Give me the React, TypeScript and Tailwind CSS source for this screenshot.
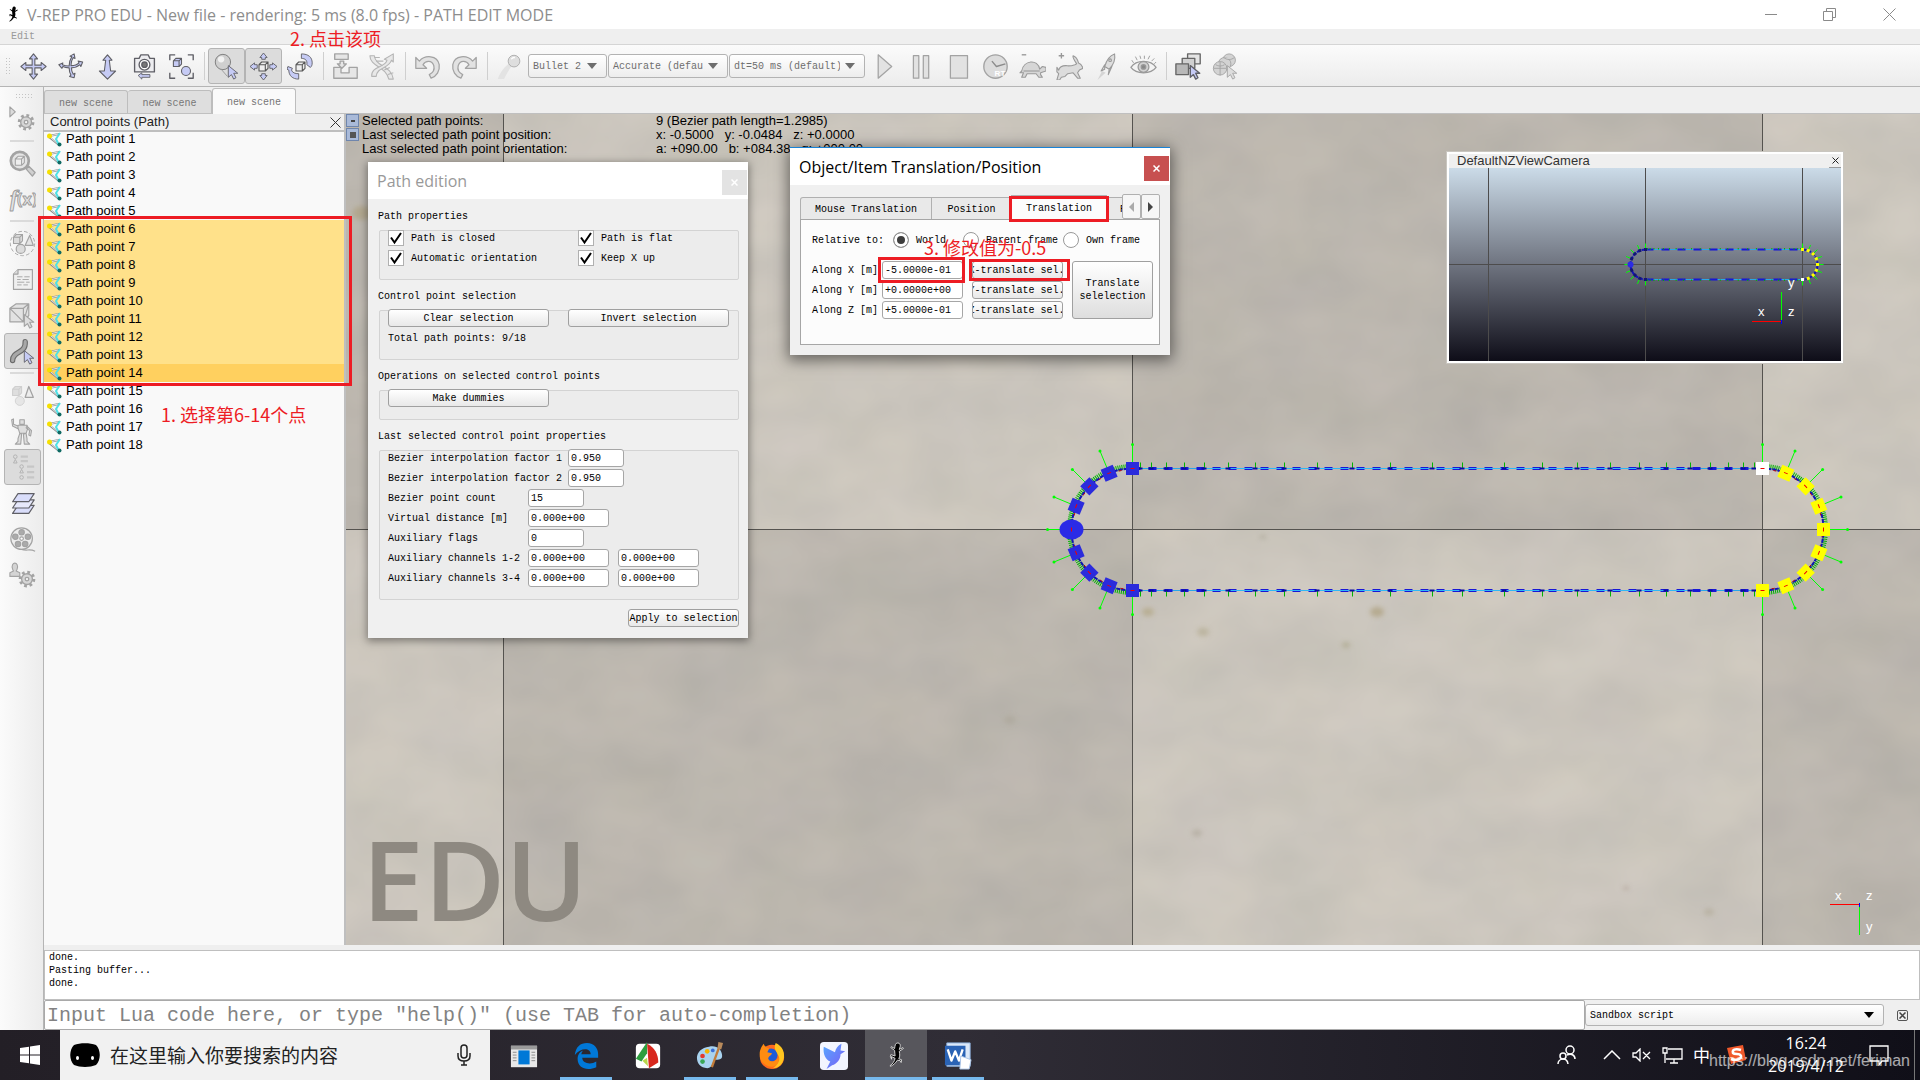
import type { ReactNode } from 'react'

const GREY = '#a3a3a3'
const DARK = '#5f5f66'
const LILAC = '#c6cbf5'

type IconProps = { children: ReactNode; size?: number }

function Icon({ children, size = 30 }: IconProps) {
  return (
    <svg
      width={size}
      height={size}
      viewBox="0 0 30 30"
      fill="none"
      strokeLinejoin="round"
      aria-hidden="true"
      className="shrink-0"
    >
      {children}
    </svg>
  )
}

const Lizard = ({ outline = 'none' }: { outline?: string }) => (
  <g stroke={outline} strokeWidth="1" fill="#000">
    <path d="M17 1c2 0 3 2 2.500 4l-1 3 4-2 .5 1-4.500 3c.5 3 1 5-.5 8l3 1-.5 3-1-2-3-.5c-2 3-4 5-7 6.500l-1-.5c3-2 5-5 5.500-8l-4-2 .3 3-1.300-3 .5-2 4.500 1.500c0-2-.5-4-.5-6l-4-3 .5-1 3.500 2c.5-3 .5-6 3.500-6z" />
  </g>
)

const Pointer = ({ fill = LILAC, stroke = DARK }: { fill?: string; stroke?: string }) => (
  <path d="M17 14v13l3.500-3 2.500 5 2.500-1.500-2.500-5h4.500z" fill={fill} stroke={stroke} />
)

const Gear = ({ x, y }: { x: number; y: number }) => (
  <g transform={`translate(${x} ${y})`}>
    <circle r="7.500" stroke={GREY} strokeWidth="3.500" strokeDasharray="3 2.900" />
    <circle r="6" fill="#d6d6d6" stroke={GREY} strokeWidth="1.500" />
    <circle r="2" fill="#f6f6f6" stroke={GREY} strokeWidth="1.500" />
  </g>
)

const Cube = ({ x, y, s, fill, stroke }: { x: number; y: number; s: number; fill: string; stroke: string }) => (
  <g transform={`translate(${x} ${y}) scale(${s})`} fill={fill} stroke={stroke} strokeWidth={1.2 / s}>
    <path d="M0 3h7v7H0zM0 3l3-3h7L7 3zM7 3l3-3v7l-3 3z" />
  </g>
)

const panIcon = (
  <path
    d="M15 1l4.500 5.500h-3v7h7v-3L29 15l-5.500 4.500v-3h-7v7h3L15 29l-4.500-5.500h3v-7h-7v3L1 15l5.500-4.500v3h7v-7h-3z"
    fill={LILAC}
    stroke={DARK}
    strokeWidth="1.200"
  />
)
const rotateCamIcon = (
  <path
    d="M19 1l1 5-2-1c-2 3-2.500 6-2.500 9 3 0 7-1 9-3l-1-2 5 1-2 5-1-2c-3 2.500-6 3.500-9.500 3.500 0 3 .5 5 2 7l2-1-1 5-5-1.500 1.500-1.500c-1.500-2.500-2-5-2-8-3 0-5-.5-7-1.500l-1 2L2 13l4.500-2-.5 2c2 1 5 1.500 7.500 1.500 0-4 1-7.500 3-10.500l-2-.5z"
    fill={LILAC}
    stroke={DARK}
    strokeWidth="1.200"
  />
)
const shiftIcon = (
  <path
    d="M15 2l5 6h-3l1.500 12H24l-9 9-9-9h5.500L13 8h-3z"
    fill={LILAC}
    stroke={DARK}
    strokeWidth="1.200"
  />
)
const cameraIcon = (
  <g stroke={DARK} strokeWidth="1.500">
    <path d="M4 6h5l2-4h8l2 4h5v15H4z" fill="#ededf0" />
    <circle cx="15" cy="13" r="6" fill="#fff" />
    <circle cx="15" cy="13" r="3" fill="#777" />
    <path d="M8 25l4-3v2h9v3h-9v2z" fill={LILAC} strokeWidth="1" />
  </g>
)
const fitIcon = (
  <g stroke={DARK} strokeWidth="1.500">
    <path d="M2 8V2h6M22 2h6v6M28 22v6h-6M8 28H2v-6" />
    <Cube x={6} y={6} s={0.9} fill={LILAC} stroke={DARK} />
    <circle cx="20" cy="20" r="5" fill={LILAC} strokeWidth="1.200" />
  </g>
)
const selectIcon = (
  <g>
    <circle cx="11" cy="10" r="8.500" fill="#cfcfcf" stroke="#777" />
    <circle cx="9" cy="7" r="3.500" fill="#f2f2f2" />
    <path d="M9 18l7 8" stroke="#999" />
    <Pointer />
  </g>
)
const moveObjIcon = (
  <g stroke={DARK} fill={LILAC}>
    <path d="M15 0l4 5h-2v2h-4V5h-2zM15 30l4-5h-2v-2h-4v2h-2zM0 15l5-4v2h3v4H5v2zM30 15l-5-4v2h-3v4h3v2z" />
    <Cube x={10} y={10} s={1} fill="#eee" stroke="#555" />
  </g>
)
const rotateObjIcon = (
  <g stroke={DARK} fill={LILAC}>
    <path d="M16 1c8 0 12 4 12 10 0 3-1 4-2 5l-4-3c1-5-2-7-6-7z" />
    <path d="M1 15l5 2-1 2c1 3 4 4 8 4v6C6 29 2 25 2 19l-2-1z" />
    <Cube x={10} y={10} s={1} fill="#eee" stroke="#555" />
  </g>
)
const assembleIcon = (
  <g stroke={GREY} strokeWidth="1.500" fill="#e6e6e6">
    <path d="M3 1h15v6H3zM2 16h8v6h9v-6h9v12H2zM9 9h4v3h3l-5 5-5-5h3z" />
  </g>
)
const ikIcon = (
  <g stroke="#b5b5b5" strokeWidth="1.200" fill="#e8e8e8">
    <path d="M1 3c0 12 18 12 21 26h5C25 14 7 15 6 3z" />
    <path d="M3 26c-1-12 15-9 17-18l-3-1 10-6v9l-2-2C22 18 9 15 8 26z" />
    <path d="M6 5h6M8 9h8M17 19l6-3M21 24l6-2" />
  </g>
)
const undoIcon = (
  <path
    d="M2 5l4 4c6-7 20-7 22 4 1 7-3 13-9 15l-2-4c4-2 6-6 5-10-2-6-9-6-12-1l4 4H2z"
    fill="#e2e2e2"
    stroke={GREY}
    strokeWidth="1.400"
  />
)
const redoIcon = <g transform="translate(30 0) scale(-1 1)">{undoIcon}</g>
const brushIcon = (
  <g>
    <path d="M2 29c3-9 8-14 13-18l3 3c-4 5-6 9-9 15z" fill="#e3e3e3" />
    <circle cx="20" cy="9" r="6.500" fill="#dedede" stroke="#aaa" />
    <path d="M17 7c1-2 3-2 4-2" stroke="#fff" strokeWidth="1.500" />
  </g>
)
const playIcon = <path d="M8 2l15 13L8 28z" fill="#e2e2e2" stroke={GREY} strokeWidth="1.400" />
const pauseIcon = <path d="M6 3h6v25H6zM17 3h6v25h-6z" fill="#e2e2e2" stroke={GREY} strokeWidth="1.400" />
const stopIcon = <path d="M6 3h19v25H6z" fill="#e2e2e2" stroke={GREY} strokeWidth="1.400" />
const clockIcon = (
  <g>
    <circle cx="15" cy="15" r="13" fill="#dcdcdc" stroke={GREY} strokeWidth="1.500" />
    <path d="M11 9l5 6 10-3" stroke="#8b8b8b" strokeWidth="1.500" />
    <text x="14" y="26" fontSize="9" fontWeight="700" fill="#fff" fontFamily="Liberation Sans">
      RT
    </text>
  </g>
)
const turtleIcon = (
  <g stroke="#999" strokeWidth="1.200" fill="#d6d6d6">
    <path d="M3 2h5" strokeWidth="1.500" />
    <path d="M3 20c2-12 18-14 20-2l3-3 4 1v4l-6 2v2l2 3h-4l-3-4H9l-2 4H3l2-5H1z" />
    <path d="M5 20h18" />
  </g>
)
const rabbitIcon = (
  <g stroke="#999" strokeWidth="1.200" fill="#dcdcdc">
    <path d="M3 3h6M6 0v6" strokeWidth="1.500" />
    <path d="M23 12c-2-3-5-7-4-9 3 1 5 4 6 8 3 1 4 3 5 6l-4 2-2 3 3 6h-3l-5-6-6 1-3 3-4 1-2 3H1l2-7-2-2v-5l2 3c1-4 4-5 8-5 4 1 7 0 10-1z" />
  </g>
)
const rocketIcon = (
  <g stroke="#999" strokeWidth="1.200" fill="#dedede">
    <path d="M24 1c1 6-1 12-6 17l-5-3c2-7 5-12 11-14zM13 13l-4 7 4-2zM18 18l-1 6 4-9z" />
    <circle cx="19" cy="8" r="1.500" />
    <path d="M10 20l4 2-9 8z" stroke="none" fill="#d5d5d5" />
  </g>
)
const eyeIcon = (
  <g stroke="#999" strokeWidth="1.400">
    <path d="M1 16c6-9 22-9 28 0-6 8-22 8-28 0z" fill="#f3f3f3" />
    <circle cx="15" cy="15.500" r="6" fill="#d2d2d2" />
    <circle cx="15" cy="15.500" r="2.500" fill="#888" />
    <path d="M4 11L2 8M8 8L6 4M12 6.500L11 3M16 6.500V3M20 7l2-4M24 9l3-3M27 12l2-2" strokeWidth="1" />
  </g>
)
const pagesIcon = (
  <g stroke="#666" strokeWidth="1.500">
    <path d="M14 1h14v11H14z" fill="#e4e4e4" />
    <path d="M8 6h14v11H8z" fill="#d0d0d0" />
    <path d="M1 12h14v12H1z" fill="#b8b8b8" />
    <Pointer />
  </g>
)
const sceneSelIcon = (
  <g stroke={GREY} fill="#d3d3d3">
    <circle cx="19" cy="8" r="7" />
    <circle cx="14" cy="12" r="7" />
    <circle cx="9" cy="17" r="7.500" />
    <path d="M2 17h14M9 10v15M13 5c4 3 8 3 12 0M4 13c3 2 7 2 10 0" />
    <Pointer fill="#ddd" stroke={GREY} />
  </g>
)

const simSettingsIcon = (
  <g>
    <path d="M1 1l6 5.500L1 12z" fill="#dcdcdc" stroke={GREY} strokeWidth="1.300" />
    <Gear x={19} y={18} />
  </g>
)
const inspectIcon = (
  <g stroke={GREY} strokeWidth="1.500">
    <circle cx="12" cy="12" r="10" fill="#e4e4e4" strokeWidth="3" />
    <Cube x={7} y={7} s={1} fill="#eee" stroke={GREY} />
    <path d="M19 21l3-3 7 7-3 4z" fill="#d0d0d0" />
  </g>
)
const fxIcon = (
  <g stroke="#9b9b9b" fill="#e3e3e3" strokeWidth="1" fontWeight="700">
    <text x="1" y="22" fontSize="25" fontStyle="italic" fontFamily="Liberation Serif">
      f
    </text>
    <text x="9" y="21" fontSize="18" fontFamily="Open Sans">
      (x)
    </text>
  </g>
)
const shapesIcon = (
  <g stroke={GREY}>
    <circle cx="15" cy="15" r="13.500" strokeDasharray="4 2.500" />
    <Cube x={5} y={5} s={1} fill="#dcdcdc" stroke={GREY} />
    <path d="M23 6l4 11h-9z" fill="#e4e4e4" strokeWidth="1.300" />
    <circle cx="13" cy="21" r="5" fill="#dcdcdc" strokeWidth="1.300" />
  </g>
)
const scriptIcon = (
  <g stroke={GREY} strokeWidth="1.300">
    <path d="M10 4h16v22H5V9z" fill="#efefef" />
    <path d="M5 9h5V4" fill="#ddd" />
    <path d="M9 12h6M17 12h6M9 15h4M15 15h7M9 18h8M19 18h4M9 21h5M16 21h5" strokeWidth="1" />
  </g>
)
const shapeEditIcon = (
  <g stroke={GREY} strokeWidth="1.300" fill="#e2e2e2">
    <path d="M1 7h15v15H1zM1 7l7-5h14l-6 5zM16 7l6-5v13l-6 7zM1 7l15 15M16 22L22 2" />
    <Pointer fill="#ddd" stroke={GREY} />
  </g>
)
const pathEditIcon = (
  <g>
    <path d="M4 25c0-11 15-7 14-21" stroke="#6b6b6b" strokeWidth="6" strokeLinecap="round" />
    <path d="M4 25c0-11 15-7 14-21" stroke="#a8a8a8" strokeWidth="3.500" strokeLinecap="round" />
    <Pointer />
  </g>
)
const shapes2Icon = (
  <g stroke="#d0d0d0">
    <Cube x={4} y={5} s={1} fill="#dedede" stroke="#cfcfcf" />
    <path d="M22 5l5 12h-9z" fill="#ededed" stroke={GREY} strokeWidth="1.400" />
    <circle cx="12" cy="21" r="5" fill="#e6e6e6" />
  </g>
)
const robotIcon = (
  <g stroke={GREY} strokeWidth="1.200" fill="#dedede">
    <path d="M12 2h5v5h-5zM10 8h10l1 3-2 6h-7l-2-6zM10 9L5 7V1l-2 1 1 7 6 3zM20 9l5 5-1 6-2-1 1-5-4-3zM12 17l-2 6v3l-3 3h6l1-11zM19 17l1 6v3l3 3h-6l-1-11z" />
  </g>
)
const hierarchyIcon = (
  <g stroke="#b0b0b0">
    <circle cx="7" cy="3" r="2" />
    <path d="M7 6l2 4H5z" />
    <circle cx="14" cy="14" r="2" />
    <path d="M14 17l2 4h-4z" />
    <circle cx="14" cy="26" r="2" />
    <path d="M13 3h8M13 8h8M20 14h8M20 20h8M20 26h8" strokeWidth="2.500" stroke="#c6c6c6" />
  </g>
)
const layersIcon = (
  <g stroke={DARK} strokeWidth="1.300">
    <path d="M10 17h18l-6 9H4z" fill="#d9ddfa" />
    <path d="M10 11h18l-6 9H4z" fill="#e6e8fb" />
    <path d="M10 4h18l-6 9H4z" fill="#d9ddfa" />
  </g>
)
const filmIcon = (
  <g stroke={GREY} strokeWidth="1.300">
    <circle cx="14" cy="14" r="12" fill="#ececec" />
    <path d="M14 26c6 2 9-1 15 2" />
    <g fill="#ababab">
      <circle cx="14" cy="7" r="3" />
      <circle cx="21" cy="12" r="3" />
      <circle cx="18" cy="20" r="3" />
      <circle cx="10" cy="20" r="3" />
      <circle cx="7" cy="12" r="3" />
    </g>
    <circle cx="14" cy="14" r="2" fill="#fff" />
  </g>
)
const userIcon = (
  <g>
    <path d="M4 8c-3-9 8-9 5 0l-1 2 4 2v4H1v-4l4-2z" fill="#d4d4d4" stroke={GREY} strokeWidth="1.200" />
    <Gear x={20} y={19} />
  </g>
)

type Tool = { name: string; icon: ReactNode; active?: boolean }

const viewTools: Tool[][] = [
  [
    { name: 'Camera pan', icon: panIcon },
    { name: 'Camera rotate', icon: rotateCamIcon },
    { name: 'Camera shift', icon: shiftIcon },
    { name: 'Camera angle', icon: cameraIcon },
    { name: 'Fit to view', icon: fitIcon },
  ],
  [
    { name: 'Click selection', icon: selectIcon, active: true },
    { name: 'Item translate', icon: moveObjIcon, active: true },
    { name: 'Item rotate', icon: rotateObjIcon },
  ],
  [
    { name: 'Assemble', icon: assembleIcon },
    { name: 'Transfer DNA', icon: ikIcon },
  ],
  [
    { name: 'Undo', icon: undoIcon },
    { name: 'Redo', icon: redoIcon },
  ],
]

const simTools: Tool[] = [
  { name: 'Start', icon: playIcon },
  { name: 'Suspend', icon: pauseIcon },
  { name: 'Stop', icon: stopIcon },
  { name: 'Real-time', icon: clockIcon },
  { name: 'Slower', icon: turtleIcon },
  { name: 'Faster', icon: rabbitIcon },
  { name: 'Threaded rendering', icon: rocketIcon },
  { name: 'Visualization', icon: eyeIcon },
]

const pageTools: Tool[] = [
  { name: 'Page selector', icon: pagesIcon },
  { name: 'Scene selector', icon: sceneSelIcon },
]

const sideTools: Tool[][] = [
  [{ name: 'Simulation settings', icon: simSettingsIcon }],
  [
    { name: 'Object properties', icon: inspectIcon },
    { name: 'Calculation modules', icon: fxIcon },
  ],
  [
    { name: 'Collections', icon: shapesIcon },
    { name: 'Scripts', icon: scriptIcon },
    { name: 'Shape edit mode', icon: shapeEditIcon },
    { name: 'Path edit mode', icon: pathEditIcon, active: true },
  ],
  [
    { name: 'Selection', icon: shapes2Icon },
    { name: 'Model browser', icon: robotIcon },
    { name: 'Scene hierarchy', icon: hierarchyIcon, active: true },
    { name: 'Layers', icon: layersIcon },
    { name: 'Video recorder', icon: filmIcon },
    { name: 'User settings', icon: userIcon },
  ],
]

function ToolButton({ tool }: { tool: Tool }) {
  return (
    <button
      aria-label={tool.name}
      className={
        tool.active
          ? 'flex h-9 w-[37px] shrink-0 items-center justify-center rounded-[3px] border border-[#b4b4b4] bg-[#dcdcdc]'
          : 'flex h-9 w-[37px] shrink-0 items-center justify-center'
      }
    >
      <Icon size={27}>{tool.icon}</Icon>
    </button>
  )
}

const Divider = () => <div className="mr-[3px] ml-1 h-7 w-px shrink-0 bg-[#cfcfcf]" />

function Combo({ label, value, className }: { label: string; value: string; className: string }) {
  return (
    <div className={`relative shrink-0 ${className}`}>
      <select
        aria-label={label}
        className="h-full w-full appearance-none overflow-hidden rounded-[3px] border border-[#b3b3b3] bg-linear-to-b from-white to-[#ededed] pr-6 pl-1 outline-none"
      >
        <option>{value}</option>
      </select>
      <svg width="10" height="6" viewBox="0 0 10 6" className="pointer-events-none absolute top-1/2 right-[10px] -mt-[3px]">
        <path d="M0 0h10L5 6z" fill="currentColor" />
      </svg>
    </div>
  )
}

function TitleBar() {
  return (
    <header className="flex h-[29px] shrink-0 items-center bg-white pl-1 font-['Open_Sans',sans-serif] text-base text-[#8d8d8d]">
      <Icon size={18}>
        <Lizard />
      </Icon>
      <h1 className="ml-[5px]">V-REP PRO EDU - New file - rendering: 5 ms (8.0 fps) - PATH EDIT MODE</h1>
      <div className="ml-auto flex text-[#8a8a8a]">
        <button aria-label="Minimize" className="flex w-[58px] justify-center">
          <svg width="12" height="12" viewBox="0 0 12 12" stroke="currentColor" fill="none">
            <path d="M0 6.500h12" />
          </svg>
        </button>
        <button aria-label="Restore" className="flex w-[58px] justify-center">
          <svg width="13" height="13" viewBox="0 0 13 13" stroke="currentColor" fill="none">
            <path d="M.5 3.500h9v9h-9zM3.500 3V.5h9v9H10" />
          </svg>
        </button>
        <button aria-label="Close" className="flex w-[62px] justify-center">
          <svg width="13" height="13" viewBox="0 0 13 13" stroke="currentColor" fill="none">
            <path d="M.5.5l12 12M12.500.5l-12 12" />
          </svg>
        </button>
      </div>
    </header>
  )
}

function Toolbar() {
  return (
    <div className="flex h-[42px] shrink-0 items-center border-b border-[#b5b5b5] bg-linear-to-b from-[#fbfbfb] to-[#ececec] pt-px text-[#6e6e6e]">
      <div className="mr-1 ml-[5px] h-[18px] w-[6px] bg-[radial-gradient(#c4c4c4_1px,transparent_1px)] bg-size-[3px_3px]" />
      {viewTools.map((group) => (
        <div key={group[0].name} className="flex shrink-0 items-center">
          {group.map((tool) => (
            <ToolButton key={tool.name} tool={tool} />
          ))}
          <Divider />
        </div>
      ))}
      <ToolButton tool={{ name: 'Dynamics visualization', icon: brushIcon }} />
      <Combo label="Physics engine" value="Bullet 2" className="h-6 w-[79px]" />
      <Combo label="Engine precision" value="Accurate (default)" className="ml-px h-6 w-[120px]" />
      <Combo label="Time step" value="dt=50 ms (default)" className="mr-px ml-px h-6 w-[136px]" />
      {simTools.map((tool) => (
        <ToolButton key={tool.name} tool={tool} />
      ))}
      <Divider />
      {pageTools.map((tool) => (
        <ToolButton key={tool.name} tool={tool} />
      ))}
    </div>
  )
}

function SideBar() {
  return (
    <nav className="flex w-11 shrink-0 flex-col border-r border-[#b5b5b5] bg-linear-to-r from-[#fbfbfb] to-[#ececec] pl-1">
      <div className="mt-[6px] mb-[2px] ml-[11px] h-[6px] w-[18px] bg-[radial-gradient(#c4c4c4_1px,transparent_1px)] bg-size-[3px_3px]" />
      {sideTools.map((group, i) => (
        <div key={group[0].name} className="flex flex-col">
          {i > 0 && <div className="my-[3px] ml-[6px] h-[2px] w-6 bg-[#dadada]" />}
          {group.map((tool) => (
            <ToolButton key={tool.name} tool={tool} />
          ))}
        </div>
      ))}
    </nav>
  )
}

function SceneTabs() {
  return (
    <div className="flex h-[27px] shrink-0 items-end border-b border-[#c0c0c0] bg-[#efefef] text-[#777]">
      <button className="h-[23px] w-[84px] rounded-t-[3px] border border-b-0 border-[#bdbdbd] bg-[#dedede] pt-[2px]">
        new scene
      </button>
      <button className="h-[23px] w-[84px] rounded-t-[3px] border border-b-0 border-l-0 border-[#bdbdbd] bg-[#dedede] pt-[2px]">
        new scene
      </button>
      <button className="-mb-px h-[26px] w-[84px] rounded-t-[3px] border border-b-0 border-[#bdbdbd] bg-[#fafafa] pt-[2px]">
        new scene
      </button>
    </div>
  )
}

function rowColor(n: number) {
  if (n === 14) return 'bg-[#ffd05f]'
  if (n >= 6 && n < 14) return 'bg-[#ffe18a]'
  return ''
}

function ControlPoints() {
  return (
    <aside className="w-[302px] shrink-0 border-r-2 border-[#bfbfbf] bg-[#f9f9f9] font-['Liberation_Sans',sans-serif] text-[13px] text-black">
      <div className="flex h-[18px] items-center justify-between border-b-2 border-[#bfbfbf] bg-[#efefef] pr-[3px] pl-[6px] text-[#222]">
        <h2>Control points (Path)</h2>
        <button aria-label="Close panel">
          <svg width="11" height="11" viewBox="0 0 11 11" stroke="#333" fill="none">
            <path d="M.5.5l10 10M10.500.5l-10 10" />
          </svg>
        </button>
      </div>
      <ul className="-mt-[2px]">
        {Array.from({ length: 18 }, (_, i) => i + 1).map((n) => (
          <li key={n} className={rowColor(n)}>
            <button className="flex h-[18px] w-full items-center gap-1 pl-[3px] text-left">
              <svg width="15" height="15" viewBox="0 0 15 15" fill="none">
                <path d="M2 4l10-2M2 5l10 8" stroke="#8d8d8d" strokeWidth="2" />
                <path d="M3 4l8-2M4 6l7 6" stroke="#e4e4e4" strokeWidth="1" />
                <path d="M13 1l-4 6 3 6" stroke="#4fe0e6" strokeWidth="2" />
                <circle cx="2.500" cy="4" r="2.500" fill="#f6e000" />
                <circle cx="12.500" cy="12.500" r="2" fill="#0f6a63" />
              </svg>
              Path point {n}
            </button>
          </li>
        ))}
      </ul>
    </aside>
  )
}

type LoopProps = { left: number; right: number; cy: number; r: number; spoke: number; node: number; whiteAt: number }

const angles = Array.from({ length: 9 }, (_, i) => -90 + i * 22.5)
const tickOffsets = [8, 19, 34, 52, 72, 96, 123, 152, 185, 220, 258, 300]

function at(cx: number, cy: number, r: number, deg: number) {
  const a = (deg * Math.PI) / 180
  return [cx + r * Math.cos(a), cy + r * Math.sin(a)]
}

// Closed path: two straight runs joined by half circles, one control point each 22.5 degrees
function PathLoop({ left, right, cy, r, spoke, node, whiteAt }: LoopProps) {
  const big = node > 6
  const top = cy - r
  const bottom = cy + r
  const k = (right - left) / 630
  const ticks = tickOffsets.flatMap((o) => [left + o * k, right - o * k])
  const arc = (rad: number) =>
    `M${left} ${cy - rad}A${rad} ${rad} 0 0 0 ${left} ${cy + rad}M${right} ${cy - rad}A${rad} ${rad} 0 0 1 ${right} ${cy + rad}`
  const runs = (inset: number) =>
    `M${left + inset} ${top}H${right - inset}M${left + inset} ${bottom}H${right - inset}`
  const tick = big ? 6 : 1.5
  const ends = [
    ...angles.map((a) => ({ cx: left, a: a + 180, color: big ? '#2b2bdc' : '#151575' })),
    ...angles.map((a, i) => ({ cx: right, a, color: i === whiteAt ? '#fff' : '#ffff00' })),
  ]

  return (
    <g fill="none">
      <path d={runs(0)} stroke="#2aa5e8" strokeWidth="1" />
      <path d={runs(0)} stroke="#1717d6" strokeWidth={big ? 3 : 2} strokeDasharray="8 8" />
      {big && <path d={runs(72)} stroke="#2fb6f5" strokeWidth="1" />}
      <path
        d={ticks.map((x) => `M${x} ${top}v${-tick}M${x} ${bottom}v${tick}`).join('')}
        stroke="#00b400"
        strokeWidth="1"
      />
      {big && (
        <path
          d={ticks.map((x) => `M${x - 3} ${top}h5M${x - 3} ${bottom}h5`).join('')}
          stroke="#0a0aa0"
          strokeWidth="2"
        />
      )}
      {big && <path d={arc(r + 2)} stroke="#00b400" strokeWidth="5" strokeDasharray="1 1" />}
      <path d={arc(r)} stroke="#1212b8" strokeWidth="2" strokeDasharray="4 1" />
      {big && <path d={arc(r - 1)} stroke="#c00000" strokeWidth="1" strokeDasharray="3 8" />}
      {ends.map(({ cx, a, color }) => {
        const [x, y] = at(cx, cy, r, a)
        const [tx, ty] = at(cx, cy, spoke, a)
        return (
          <g key={`${cx}-${a}`}>
            <path d={`M${x} ${y}L${tx} ${ty}`} stroke="#00ff00" strokeWidth="1" />
            {big && <circle cx={tx} cy={ty} r="1.500" fill="#00ff00" />}
            {cx === left && a === 180 ? (
              <ellipse cx={x} cy={y} rx={big ? 12 : 3} ry={big ? 10 : 3} fill="#2b2be6" />
            ) : (
              <rect
                x={x - node / 2}
                y={y - node / 2}
                width={node}
                height={node}
                fill={color}
                transform={`rotate(${a} ${x} ${y})`}
              />
            )}
            {big && <path d={`M${x - 2} ${y}h4`} stroke="#f00000" transform={`rotate(${a + 90} ${x} ${y})`} />}
          </g>
        )
      })}
    </g>
  )
}

const stains = [
  [1148, 612, 6, '#a89a6c'],
  [1377, 612, 7, '#a08f62'],
  [1263, 537, 3, '#94907f'],
  [1203, 632, 6, '#a9a080'],
  [1346, 645, 4, '#9c9670'],
  [1626, 888, 3, '#a08f80'],
  [1709, 912, 5, '#aba38c'],
  [362, 213, 10, '#a89a72'],
  [1010, 720, 6, '#a8a394'],
  [1197, 833, 5, '#a59c8e'],
] as const

function Floor() {
  return (
    <svg
      viewBox="346 114 1574 831"
      preserveAspectRatio="xMidYMid slice"
      className="absolute inset-0 h-full w-full"
      aria-hidden="true"
    >
      <defs>
        <filter id="grain" x="0" y="0" width="1" height="1" colorInterpolationFilters="sRGB">
          <feTurbulence type="fractalNoise" baseFrequency="0.012 0.016" numOctaves="3" seed="11" />
          <feColorMatrix values="0.8 0 0 0 0.38 0.7 0.1 0 0 0.350 0.6 0 0.2 0 0.320 0 0 0 0 0.09" />
        </filter>
        <filter id="soft">
          <feGaussianBlur stdDeviation="2.5" />
        </filter>
      </defs>
      <rect x="346" y="114" width="1574" height="831" fill="#cbc6bd" />
      <path d="M346 114h157v415H346zM503 529h629v416H503zM1132 114h630v415h-630zM1762 529h158v416h-158z" fill="#bab5ad" />
      <rect x="346" y="114" width="1574" height="831" filter="url(#grain)" />
      <g filter="url(#soft)" opacity="0.5">
        {stains.map(([x, y, r, color]) => (
          <ellipse key={`${x}-${y}`} cx={x} cy={y} rx={r} ry={r * 0.7} fill={color} />
        ))}
      </g>
      <path d="M503.500 114v831M1132.500 114v831M1762.500 114v831M346 529.500h1574" stroke="#55534f" />
      <PathLoop left={1132.5} right={1762.5} cy={529.5} r={61} spoke={85} node={13} whiteAt={0} />
      <path d="M1830 904.500h30" stroke="#f00" />
      <path d="M1859.500 907v28" stroke="#0f0" />
      <path d="M1859.500 903v4" stroke="#00f" />
      <g fill="#fff" fontFamily="Liberation Sans" fontSize="13">
        <text x="1835" y="900">x</text>
        <text x="1866" y="900">z</text>
        <text x="1866" y="931">y</text>
      </g>
      <text x="362" y="921" fontFamily="Open Sans" fontSize="111" fontWeight="600" fill="#8e8981">
        EDU
      </text>
    </svg>
  )
}

function MiniView() {
  return (
    <section className="absolute top-[38px] right-[77px] flex h-[211px] w-[396px] flex-col border-2 border-white outline outline-[#c9c6c0]">
      <div className="flex h-[14px] shrink-0 items-center justify-between bg-[#efefef] pl-2 font-['Liberation_Sans',sans-serif] text-[13px] text-[#333]">
        <h2>DefaultNZViewCamera</h2>
        <button aria-label="Close view" className="flex h-full w-3 items-center justify-center border-b border-[#999]">
          <svg width="7" height="7" viewBox="0 0 7 7" stroke="#222" fill="none">
            <path d="M.5.5l6 6M6.500.5l-6 6" />
          </svg>
        </button>
      </div>
      <svg viewBox="1449 168 392 193" preserveAspectRatio="xMidYMid slice" className="min-h-0 flex-1">
        <defs>
          <linearGradient id="sky" x1="0" y1="0" x2="0" y2="1">
            <stop offset="0" stopColor="#cbdbe8" />
            <stop offset="0.5" stopColor="#6f7480" />
            <stop offset="1" stopColor="#0e0d18" />
          </linearGradient>
        </defs>
        <rect x="1449" y="168" width="392" height="193" fill="url(#sky)" />
        <path d="M1488.500 168v193M1645.500 168v193M1802.500 168v193M1449 264.500h392" stroke="#4d4c4c" />
        <PathLoop left={1645.5} right={1802.5} cy={264.5} r={15} spoke={21} node={3} whiteAt={8} />
        <path d="M1752 321.500h29" stroke="#f00" />
        <path d="M1781.500 292v28" stroke="#0f0" />
        <path d="M1781.500 320v4" stroke="#00f" />
        <g fill="#fff" fontFamily="Liberation Sans" fontSize="13">
          <text x="1758" y="316">x</text>
          <text x="1788" y="316">z</text>
          <text x="1788" y="287">y</text>
        </g>
      </svg>
    </section>
  )
}

function SceneInfo() {
  return (
    <div className="absolute top-0 left-0 flex font-['Liberation_Sans',sans-serif] text-[13px] leading-[14px] whitespace-pre text-black">
      <div className="mr-[3px] flex w-[13px] flex-col gap-px">
        <button aria-label="Collapse" className="flex h-[13px] items-center justify-center border border-[#6f86ad] bg-[#a9bad9]">
          <span className="h-[2px] w-1 bg-[#444]" />
        </button>
        <button aria-label="Pin" className="flex h-[13px] items-center justify-center border border-[#6f86ad] bg-[#a9bad9]">
          <span className="h-[6px] w-[6px] bg-[#555]" />
        </button>
      </div>
      <div className="w-[294px]">
        <p>Selected path points:</p>
        <p>Last selected path point position:</p>
        <p>Last selected path point orientation:</p>
      </div>
      <div>
        <p>9 (Bezier path length=1.2985)</p>
        <p>{'x: -0.5000   y: -0.0484   z: +0.0000'}</p>
        <p>{'a: +090.00   b: +084.38   g: +000.00'}</p>
      </div>
    </div>
  )
}

const fieldClass = 'h-[18px] rounded-[3px] border border-[#a6a6a6] bg-white px-[2px] pt-px outline-none'
const pushClass =
  'flex h-[18px] items-center justify-center overflow-hidden rounded-[3px] border border-[#a0a0a0] bg-linear-to-b from-white to-[#e8e8e8] pt-px whitespace-nowrap'

function Check({ label }: { label: string }) {
  return (
    <label className="flex h-5 items-center gap-[7px]">
      <span className="relative flex h-4 w-4">
        <input type="checkbox" defaultChecked className="peer h-4 w-4 appearance-none border border-[#b0b0b0] bg-white" />
        <svg
          viewBox="0 0 16 16"
          className="pointer-events-none absolute inset-0 hidden peer-checked:block"
          fill="none"
          stroke="#000"
          strokeWidth="2"
        >
          <path d="M3 7.500l3.500 5L13 3" />
        </svg>
      </span>
      <span className="pt-px">{label}</span>
    </label>
  )
}

function Group({ title, height, children }: { title: string; height: string; children: ReactNode }) {
  return (
    <section className="mb-[6px]">
      <h3 className="mb-[3px] h-[21px] pt-px leading-5">{title}</h3>
      <div className={`ml-px rounded-[2px] border border-[#d3d3d3] bg-[#ececec] px-2 ${height}`}>
        <div className="-mt-[3px]">{children}</div>
      </div>
    </section>
  )
}

const pointFields = [
  { label: 'Bezier interpolation factor 1', labelWidth: 'w-[180px]', width: 'w-14', values: ['0.950'] },
  { label: 'Bezier interpolation factor 2', labelWidth: 'w-[180px]', width: 'w-14', values: ['0.950'] },
  { label: 'Bezier point count', labelWidth: 'w-[140px]', width: 'w-14', values: ['15'] },
  { label: 'Virtual distance [m]', labelWidth: 'w-[140px]', width: 'w-[81px]', values: ['0.000e+00'] },
  { label: 'Auxiliary flags', labelWidth: 'w-[140px]', width: 'w-14', values: ['0'] },
  { label: 'Auxiliary channels 1-2', labelWidth: 'w-[140px]', width: 'w-[81px]', values: ['0.000e+00', '0.000e+00'] },
  { label: 'Auxiliary channels 3-4', labelWidth: 'w-[140px]', width: 'w-[81px]', values: ['0.000e+00', '0.000e+00'] },
]

function CloseGlyph() {
  return (
    <svg width="7" height="7" viewBox="0 0 7 7" stroke="#fff" strokeWidth="1.500" fill="none">
      <path d="M.5.5l6 6M6.500.5l-6 6" />
    </svg>
  )
}

function PathEdition() {
  return (
    <section className="absolute top-12 left-[22px] w-[380px] bg-[#f0f0f0] pb-[11px] text-black shadow-[0_2px_8px_1px_rgba(0,0,0,0.4)]">
      <div className="flex h-[37px] items-center justify-between bg-white pr-px pl-[9px]">
        <h2 className="font-['Open_Sans',sans-serif] text-base text-[#999]">Path edition</h2>
        <button aria-label="Close Path edition" className="mt-1 flex h-[25px] w-[25px] items-center justify-center bg-[#e3e3e3]">
          <CloseGlyph />
        </button>
      </div>
      <div className="pt-[7px] pr-[9px] pl-[10px]">
        <Group title="Path properties" height="h-[50px]">
          <div className="grid grid-cols-[190px_1fr]">
            <Check label="Path is closed" />
            <Check label="Path is flat" />
            <Check label="Automatic orientation" />
            <Check label="Keep X up" />
          </div>
        </Group>
        <Group title="Control point selection" height="h-[50px]">
          <div className="flex h-5 items-center gap-[19px]">
            <button className={`${pushClass} w-[161px]`}>Clear selection</button>
            <button className={`${pushClass} w-[161px]`}>Invert selection</button>
          </div>
          <p className="pt-px leading-5">Total path points: 9/18</p>
        </Group>
        <Group title="Operations on selected control points" height="h-[30px]">
          <div className="flex h-5 items-center">
            <button className={`${pushClass} w-[161px]`}>Make dummies</button>
          </div>
        </Group>
        <Group title="Last selected control point properties" height="h-[150px]">
          {pointFields.map((field) => (
            <div key={field.label} className="flex h-5 items-center">
              <label htmlFor={field.label} className={`pt-px ${field.labelWidth}`}>
                {field.label}
              </label>
              {field.values.map((value, i) => (
                <input
                  key={i}
                  id={i === 0 ? field.label : undefined}
                  aria-label={i > 0 ? field.label : undefined}
                  defaultValue={value}
                  className={`${fieldClass} mr-[9px] ${field.width}`}
                />
              ))}
            </div>
          ))}
        </Group>
        <button className={`${pushClass} mt-[9px] ml-auto w-[111px]`}>Apply to selection</button>
      </div>
    </section>
  )
}

function Radio({ label, checked, className }: { label: string; checked?: boolean; className: string }) {
  return (
    <label className={`flex items-center gap-[7px] ${className}`}>
      <input
        type="radio"
        name="relative-to"
        defaultChecked={checked}
        className="h-4 w-4 appearance-none rounded-full border border-[#999] bg-white checked:bg-[#3d3d3d] checked:shadow-[inset_0_0_0_3px_white]"
      />
      <span className="pt-px">{label}</span>
    </label>
  )
}

const axes = [
  { axis: 'X', value: '-5.0000e-01' },
  { axis: 'Y', value: '+0.0000e+00' },
  { axis: 'Z', value: '+5.0000e-01' },
]

function TranslationDialog() {
  return (
    <section className="absolute top-[33px] left-[444px] w-[380px] border-t border-[#1883d7] bg-[#f0f0f0] px-[10px] pb-[10px] text-black shadow-[0_3px_14px_2px_rgba(0,0,0,0.5)]">
      <div className="-mx-[10px] flex h-[37px] items-center justify-between bg-white pr-px pl-[9px]">
        <h2 className="font-['Open_Sans',sans-serif] text-base">Object/Item Translation/Position</h2>
        <button aria-label="Close dialog" className="mt-1 flex h-[25px] w-[25px] items-center justify-center bg-[#c75050]">
          <CloseGlyph />
        </button>
      </div>
      <div className="mt-[10px] flex h-6 items-end">
        <button className="h-[22px] w-[132px] rounded-tl-[3px] border border-b-0 border-[#b0b0b0] bg-[#e9e9e9] pt-[2px]">
          Mouse Translation
        </button>
        <button className="h-[22px] w-[79px] border-t border-[#b0b0b0] bg-[#e9e9e9] pt-[2px]">Position</button>
        <button className="h-6 w-24 border border-b-0 border-[#b0b0b0] bg-[#fcfcfc] pt-[2px]">Translation</button>
        <button className="h-[22px] w-[15px] overflow-hidden border-t border-[#b0b0b0] bg-[#e9e9e9] pt-[2px] pl-[13px] text-left whitespace-nowrap">
          Position Scaling
        </button>
        <button aria-label="Previous tab" className="flex h-[25px] w-[19px] items-center justify-center rounded-[2px] border border-[#b0b0b0] bg-[#f6f6f6]">
          <svg width="5" height="10" viewBox="0 0 5 10" fill="#aaa">
            <path d="M5 0v10L0 5z" />
          </svg>
        </button>
        <button aria-label="Next tab" className="flex h-[25px] w-[19px] items-center justify-center rounded-[2px] border border-[#b0b0b0] bg-[#f6f6f6]">
          <svg width="5" height="10" viewBox="0 0 5 10" fill="#444">
            <path d="M0 0v10l5-5z" />
          </svg>
        </button>
      </div>
      <div className="h-[126px] border border-[#a6a6a6] bg-[#fcfcfc] pt-[10px] pl-[11px]">
        <div className="flex h-5 items-center">
          <span className="w-[81px] pt-px">Relative to:</span>
          <Radio label="World" checked className="w-[70px]" />
          <Radio label="Parent frame" className="w-[100px]" />
          <Radio label="Own frame" className="w-[84px]" />
        </div>
        <div className="mt-[10px] flex gap-[9px]">
          <div>
            {axes.map(({ axis, value }) => (
              <div key={axis} className="flex h-5 items-center">
                <label htmlFor={`along-${axis}`} className="w-[70px] pt-px">
                  Along {axis} [m]
                </label>
                <input id={`along-${axis}`} defaultValue={value} className={`${fieldClass} w-[81px]`} />
                <button className={`${pushClass} ml-[9px] w-[91px] pr-[2px]`}>{axis}-translate sel.</button>
              </div>
            ))}
          </div>
          <button className="mt-px h-[58px] w-[81px] rounded-[3px] border border-[#a0a0a0] bg-linear-to-b from-white to-[#dedede] leading-[13px]">
            Translate selelection
          </button>
        </div>
      </div>
    </section>
  )
}

function Console() {
  return (
    <div className="shrink-0 bg-[#efefef] pt-[5px]">
      <div className="h-[50px] border border-[#bfbfbf] bg-white px-1 leading-[13px] text-black">
        <p>done.</p>
        <p>Pasting buffer...</p>
        <p>done.</p>
      </div>
      <div className="flex h-[30px] items-center">
        <input
          aria-label="Lua code"
          placeholder={'Input Lua code here, or type "help()" (use TAB for auto-completion)'}
          className="h-full min-w-0 flex-1 rounded-[2px] border border-[#a9a9a9] bg-white px-[2px] text-xl outline-none placeholder:text-[#828282]"
        />
        <Combo label="Script" value="Sandbox script" className="h-[22px] w-[299px] text-black" />
        <button aria-label="Clear console" className="mr-3 ml-[13px] flex h-[11px] w-[11px] items-center justify-center rounded-[2px] border border-[#555]">
          <svg width="7" height="7" viewBox="0 0 7 7" stroke="#444" strokeWidth="1.500" fill="none">
            <path d="M.5.5l6 6M6.500.5l-6 6" />
          </svg>
        </button>
      </div>
    </div>
  )
}

const apps = [
  {
    name: 'Reader',
    icon: (
      <g>
        <path d="M1 4h28v23H1z" fill="#e8e8e8" />
        <path d="M1 4h28v4H1z" fill="#9a9a9a" />
        <path d="M9 9h12v15H9z" fill="#0078d7" />
        <path d="M3 11h4M3 14h4M3 17h4M3 20h4M23 11h4M23 14h4M23 17h4M23 20h4" stroke="#888" />
      </g>
    ),
  },
  {
    name: 'Edge',
    open: true,
    icon: (
      <path
        d="M3 14C4 5 9 1 16 1c8 0 12 6 12 12v4H11c0 6 9 8 15 4v6c-9 4-20 2-20-9 0-5 3-8 6-9-1 1-2 3-2 4h10c0-7-11-7-17 1z"
        fill="#0078d7"
      />
    ),
  },
  {
    name: 'Capture',
    icon: (
      <g>
        <rect x="2" y="2" width="26" height="26" rx="4" fill="#fff" />
        <path d="M14 0L2 18l6 3 6-9z" fill="#2e9e3f" />
        <path d="M14 2c8 4 12 11 12 20l-10 6z" fill="#d8281e" />
        <path d="M9 20l5-3 1 9z" fill="#b8d64a" />
      </g>
    ),
  },
  {
    name: 'Paint',
    open: true,
    icon: (
      <g>
        <path d="M14 5c8-2 14 3 14 10 0 4-4 4-7 4-4 0-2 9-9 9C5 28 1 23 1 17S6 6 14 5z" fill="#a9d3ef" />
        <circle cx="7" cy="15" r="2.500" fill="#e33b2e" />
        <circle cx="12" cy="10" r="2.500" fill="#f4b400" />
        <circle cx="7" cy="21" r="2.500" fill="#3aa757" />
        <circle cx="18" cy="9" r="2" fill="#3b6fd8" />
        <path d="M25 5l-8 22" stroke="#c27c3a" strokeWidth="2.500" />
        <path d="M24 0l5 1-2 7-4-1z" fill="#b88a5b" />
      </g>
    ),
  },
  {
    name: 'Firefox',
    open: true,
    icon: (
      <g>
        <circle cx="15" cy="16" r="13" fill="#ff6a1c" />
        <circle cx="14" cy="14" r="7" fill="#1e5bd8" />
        <path d="M2 16C1 9 4 5 6 2c1 3 3 4 6 5l-2 4 5 1c-1 3-4 3-4 6 2 5 9 3 11-2 2 8-5 12-11 10-5-2-8-5-9-10z" fill="#ff8c12" />
        <path d="M19 1c7 3 11 11 8 19-2 5-6 8-11 8 6-4 8-9 6-13-2-5-6-8-3-14z" fill="#ffc51f" />
      </g>
    ),
  },
  {
    name: 'Messenger',
    icon: (
      <g>
        <defs>
          <linearGradient id="bird" x1="0" y1="0" x2="1" y2="1">
            <stop offset="0" stopColor="#56a8ff" />
            <stop offset="1" stopColor="#7a5cf5" />
          </linearGradient>
        </defs>
        <rect x="0" y="0" width="30" height="30" rx="4" fill="#f2f5ff" />
        <path d="M4 5l12 6c1-4 3-7 7-9l-1 7 5 1-5 3c0 6-4 10-9 12l-6 4 4-8c-5-2-8-8-7-16z" fill="url(#bird)" />
      </g>
    ),
  },
  { name: 'V-REP', open: true, active: true, icon: <Lizard outline="#ddd" /> },
  {
    name: 'Word',
    open: true,
    icon: (
      <g>
        <path d="M3 1h25v25H3z" fill="#dbe8f8" stroke="#8db1df" />
        <path d="M1 4h22v21H1z" fill="#2a63b5" />
        <path d="M4 8l4 12 4-10 4 10 4-12" stroke="#fff" strokeWidth="2.500" />
        <path d="M18 15l11 4-2 10H17z" fill="#fff" stroke="#aac4e6" />
      </g>
    ),
  },
]

function Taskbar() {
  return (
    <footer className="flex h-[50px] shrink-0 items-stretch bg-linear-to-r from-[#231f26] via-[#302d36] to-[#100f18] font-['Open_Sans','Noto_Sans_CJK_SC',sans-serif] text-white">
      <button aria-label="Start" className="flex w-[60px] items-center justify-center">
        <svg width="20" height="20" viewBox="0 0 20 20" fill="#fff">
          <path d="M0 3l9-1.300V9.500H0zM10 1.500L20 0v9.500H10zM0 10.500h9v7.800L0 17zM10 10.500h10V20l-10-1.500z" />
        </svg>
      </button>
      <div className="mr-[3px] flex w-[430px] items-center bg-[#f1f1f1] pr-[18px] pl-[10px]">
        <svg width="30" height="24" viewBox="0 0 30 24">
          <path d="M4 2c6-2.500 16-2.500 22 0 5 5 5 15 0 20-6 2.500-16 2.500-22 0-5-5-5-15 0-20z" />
          <ellipse cx="7.500" cy="15" rx="1.500" ry="2" fill="#fff" />
          <ellipse cx="22.500" cy="15" rx="1.500" ry="2" fill="#fff" />
        </svg>
        <input
          aria-label="搜索"
          placeholder="在这里输入你要搜索的内容"
          className="ml-[10px] min-w-0 flex-1 bg-transparent font-['Noto_Sans_CJK_SC',sans-serif] text-[19px] outline-none placeholder:text-[#222]"
        />
        <svg width="16" height="22" viewBox="0 0 16 22" fill="none" stroke="#222" strokeWidth="1.500">
          <rect x="5" y="1" width="6" height="13" rx="3" />
          <path d="M2 9v3c0 3 2 5 6 5s6-2 6-5V9M8 17v4M5 21h6" />
        </svg>
      </div>
      {apps.map((app) => (
        <button
          key={app.name}
          aria-label={app.name}
          className={
            app.active
              ? 'flex w-[62px] flex-col items-center justify-between bg-[#57565c] pt-3'
              : 'flex w-[62px] flex-col items-center justify-between px-[5px] pt-3'
          }
        >
          <Icon size={28}>{app.icon}</Icon>
          {app.open && <span className="h-[3px] w-full bg-[#76b9ed]" />}
        </button>
      ))}
      <div className="ml-auto flex items-center">
        <button aria-label="People" className="mr-[26px]">
          <svg width="20" height="20" viewBox="0 0 20 20" fill="none" stroke="#fff" strokeWidth="1.500">
            <circle cx="13" cy="5" r="4" />
            <circle cx="6" cy="11" r="3" />
            <path d="M1 19c0-6 9-7 10 0M10 10c4-2 8 0 8 4" />
          </svg>
        </button>
        <button aria-label="Show hidden icons" className="mr-[11px]">
          <svg width="18" height="10" viewBox="0 0 18 10" fill="none" stroke="#fff" strokeWidth="1.500">
            <path d="M1 9l8-8 8 8" />
          </svg>
        </button>
        <button aria-label="Volume" className="mr-[11px]">
          <svg width="19" height="14" viewBox="0 0 19 14" fill="none" stroke="#fff" strokeWidth="1.300">
            <path d="M1 5h3l4-4v12L4 9H1zM11 4l7 7M18 4l-7 7" />
          </svg>
        </button>
        <button aria-label="Network" className="mr-[10px]">
          <svg width="21" height="17" viewBox="0 0 21 17" fill="none" stroke="#fff" strokeWidth="1.300">
            <path d="M6 2h14v10H4M12 12v4M8 16h8M1 1h4v5H1zM3 6v10" />
          </svg>
        </button>
        <button className="mr-4 font-['Noto_Sans_CJK_SC',sans-serif] text-[17px]">中</button>
        <button aria-label="Input method" className="mr-[19px]">
          <svg width="20" height="20" viewBox="0 0 20 20" fill="none">
            <path d="M1 3l16-3 3 15-15 4z" fill="#f0592b" />
            <path d="M15 5C9 3 6 5 7 8c2 2 7 0 8 3s-5 5-10 3" stroke="#fff" strokeWidth="2.500" />
          </svg>
        </button>
        <div className="mr-[22px] w-[82px] text-center text-base leading-[23px]">
          <p>16:24</p>
          <p>2019/4/12</p>
        </div>
        <button aria-label="Notifications" className="mr-[25px]">
          <svg width="20" height="21" viewBox="0 0 20 21" fill="none" stroke="#fff" strokeWidth="1.300">
            <path d="M1 1h18v15h-6l-3 4v-4H1z" />
          </svg>
        </button>
        <div className="h-[50px] w-[6px] border-l border-[#777]" />
      </div>
    </footer>
  )
}

function Annotations() {
  return (
    <div className="pointer-events-none absolute inset-0 z-20 font-['Noto_Sans_CJK_SC',sans-serif] text-lg leading-6 whitespace-nowrap text-[#ed1c24]">
      <p className="absolute top-[26px] left-[290px]">2. 点击该项</p>
      <p className="absolute top-[402px] left-[161px]">1. 选择第6-14个点</p>
      <p className="absolute top-[235px] left-[924px]">3. 修改值为-0.5</p>
      <div className="absolute top-[216px] left-[38px] h-[170px] w-[314px] border-3 border-[#ed1c24]" />
      <div className="absolute top-[196px] left-[1009px] h-[26px] w-[100px] border-3 border-[#ed1c24]" />
      <div className="absolute top-[257px] left-[878px] h-[26px] w-[87px] border-3 border-[#ed1c24]" />
      <div className="absolute top-[259px] left-[969px] h-[22px] w-[101px] border-3 border-[#ed1c24]" />
      <p className="absolute right-[10px] bottom-[7px] font-['Liberation_Sans',sans-serif] text-base text-white/65">
        https://blog.csdn.net/feriman
      </p>
    </div>
  )
}

export default function App() {
  return (
    <div className="relative flex h-screen flex-col overflow-hidden bg-[#efefef] font-['Liberation_Mono',monospace] text-[10px]">
      <TitleBar />
      <div className="flex h-4 shrink-0 items-center border-b border-[#d5d5d5] pl-[11px] text-[#999]">
        <button>Edit</button>
      </div>
      <Toolbar />
      <div className="flex min-h-0 flex-1">
        <SideBar />
        <div className="flex min-w-0 flex-1 flex-col">
          <SceneTabs />
          <div className="flex min-h-0 flex-1">
            <ControlPoints />
            <main className="relative min-w-0 flex-1 overflow-hidden">
              <Floor />
              <SceneInfo />
              <PathEdition />
              <TranslationDialog />
              <MiniView />
            </main>
          </div>
          <Console />
        </div>
      </div>
      <Taskbar />
      <Annotations />
    </div>
  )
}
